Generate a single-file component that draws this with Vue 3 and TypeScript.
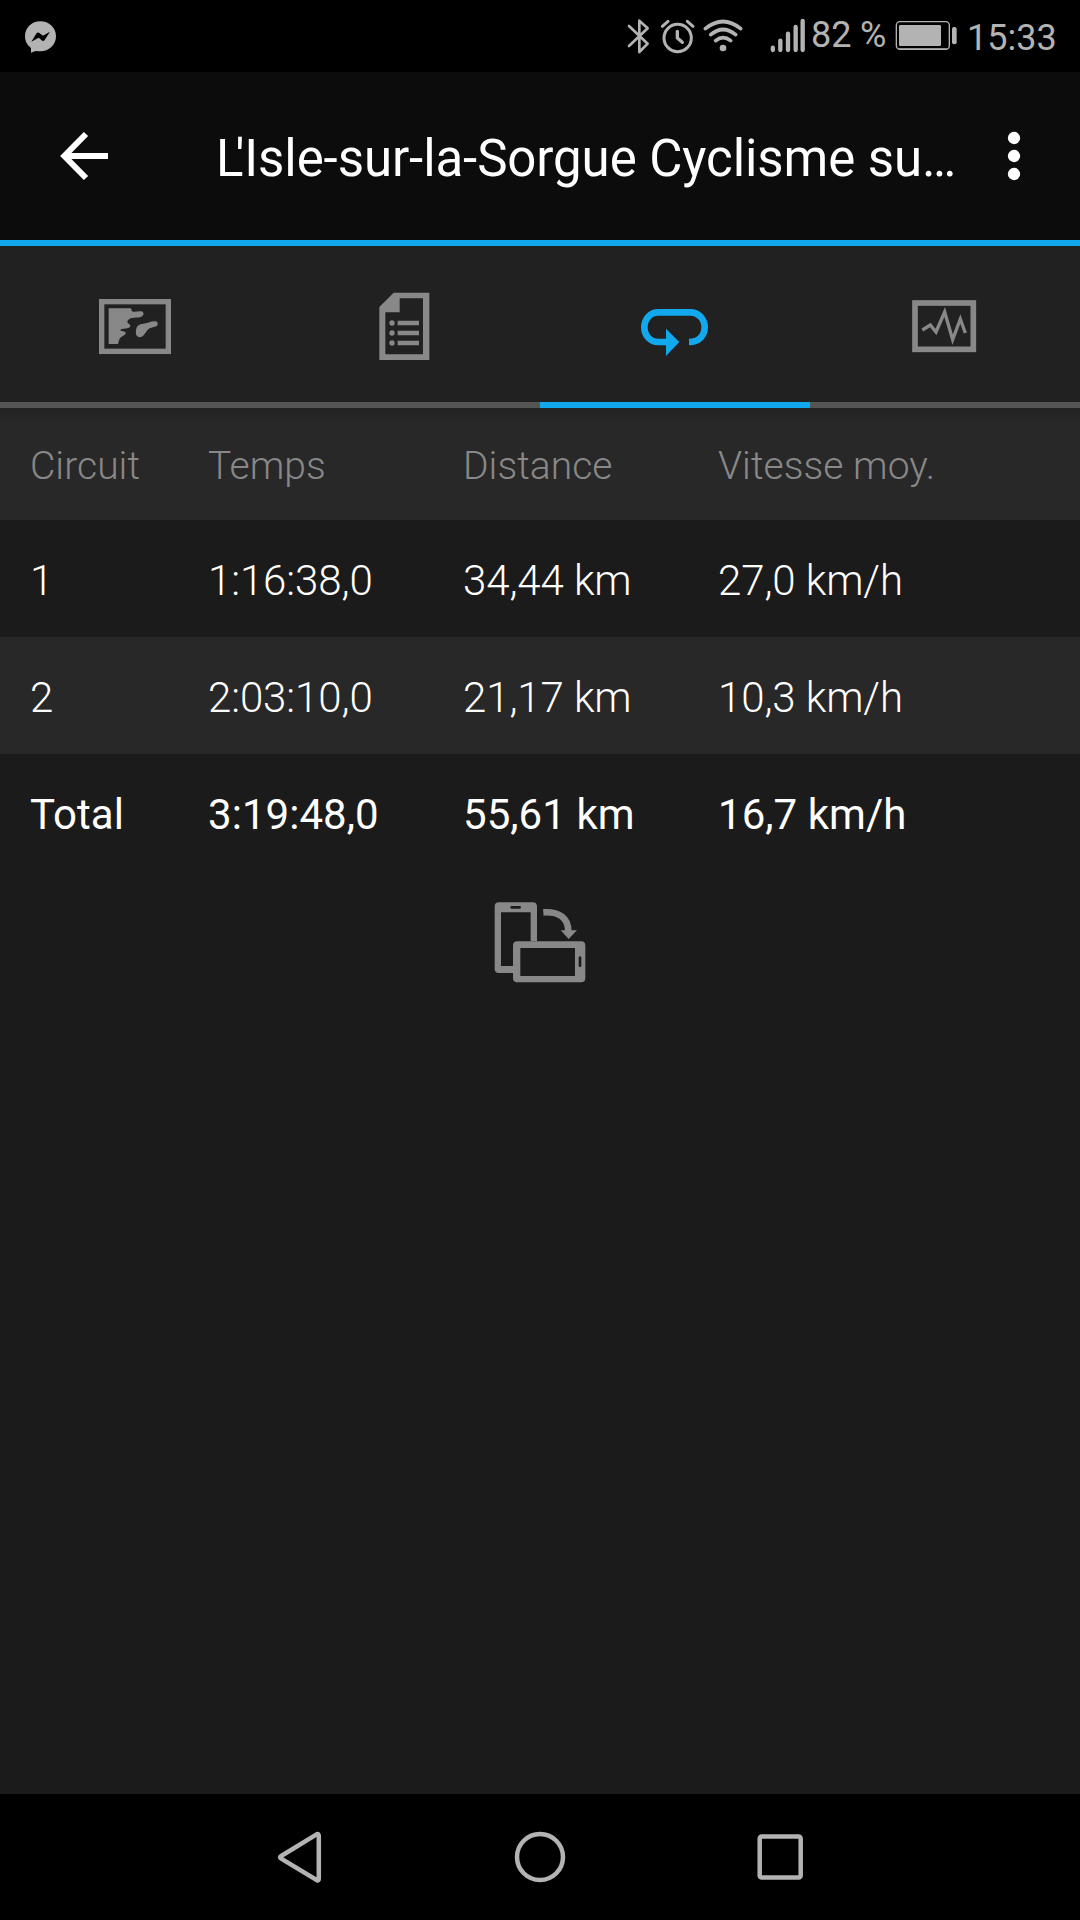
<script setup lang="ts">
interface Lap {
  lap: string
  time: string
  distance: string
  speed: string
  kind: string
}

const columns = ['Circuit', 'Temps', 'Distance', 'Vitesse moy.']
const laps: Lap[] = [
  { lap: '1', time: '1:16:38,0', distance: '34,44 km', speed: '27,0 km/h', kind: 'odd' },
  { lap: '2', time: '2:03:10,0', distance: '21,17 km', speed: '10,3 km/h', kind: 'even' },
  { lap: 'Total', time: '3:19:48,0', distance: '55,61 km', speed: '16,7 km/h', kind: 'total' },
]
</script>

<template>
  <div class="screen">
    <header class="status">
      <svg class="messenger" width="36" height="36" viewBox="66 54 108 108">
        <path fill="#b3b3b3" d="M121 64c26 0 47 19 47 45s-21 45-47 45c-6 0-10-1-14-1l-14 5v-14c-11-8-18-20-18-35 0-26 20-45 46-45z" />
        <path fill="#000" d="M94 125l16-26q3-3 7-1l12 9 21-12-16 25q-3 4-7 2l-11-9z" />
      </svg>
      <span class="spacer"></span>
      <svg width="150" height="72" viewBox="75 0 450 216" fill="none" stroke="#b3b3b3">
        <path stroke-width="8" stroke-linejoin="round" stroke-linecap="round" d="M87 78l56 53-25 25V62l25 23-56 53" />
        <circle cx="233" cy="114" r="41" stroke-width="9" />
        <path stroke-width="10" stroke-linecap="round" stroke-linejoin="round" d="M232 94v20l15 13" />
        <path stroke-width="9" stroke-linecap="round" d="M187 79l17-15M262 64l17 15" />
        <path stroke-width="11" stroke-linecap="round" d="M316 86q53-43 106 0M332 104q37-31 75 0M347 122q22-18 45 0" />
        <circle cx="369" cy="144" r="10" fill="#b3b3b3" stroke="none" />
      </svg>
      <svg class="signal" width="38" height="72" viewBox="507 0 114 216" stroke="#b3b3b3" stroke-width="13" stroke-linecap="round">
        <path d="M518.500 143v7M541 122v28M564 101v49M587 81v69M608 63v87" />
      </svg>
      <span class="percent">82 %</span>
      <svg class="battery" width="64" height="72" viewBox="885 0 192 216">
        <rect x="889" y="65" width="159" height="83" rx="11" fill="none" stroke="#b3b3b3" stroke-width="4" />
        <path d="M896 147h144" stroke="#b3b3b3" stroke-width="5" />
        <rect x="897" y="75" width="126" height="63" rx="4" fill="#b3b3b3" />
        <rect x="1056" y="81" width="14" height="52" rx="6" fill="#b3b3b3" />
      </svg>
      <span class="clock">15:33</span>
    </header>

    <div class="appbar">
      <svg class="back" width="52" height="52" viewBox="177 390 156 156" fill="none" stroke="#fff" stroke-width="18">
        <path d="M258 402l-65 66 65 66M191 468h133" />
      </svg>
      <h1><span class="initial">L</span>'Isle-sur-la-Sorgue Cyclisme su…</h1>
      <svg class="more" width="20" height="52" viewBox="612 90 60 156" fill="#fff">
        <circle cx="642" cy="114" r="18.500" /><circle cx="642" cy="168" r="18.500" /><circle cx="642" cy="222" r="18.500" />
      </svg>
    </div>

    <nav class="tabs">
      <div class="tab">
        <svg viewBox="30 -3 270 270" fill="#888">
          <rect x="65" y="65" width="200" height="149" fill="none" stroke="#888" stroke-width="16" />
          <path d="M86 85h66c5 4-1 9 8 10 8 1 17-3 25-1 8 3 7 13-1 16-9 4-19 1-29 4-8 3-14 7-13 13 2 5 10 5 9 12-2 8-18 6-28 9-4 3-1 6 7 6 6 1 9 5 6 9-5 5-13 7-17 13-3 6-3 10-5 16H86z" />
          <path d="M172 139c7-8 19-7 29-10 9-3 18-7 26-5 8 3 8 11 2 15-6 3-14 3-20 6-9 5-13 17-20 23-7 6-19 4-21-5-1-9 0-18 4-24z" />
        </svg>
      </div>
      <div class="tab">
        <svg viewBox="0 -3 270 270" fill="#888">
          <path fill-rule="evenodd" d="M101 38h107v202H58V81zM119 55v42H76v126h113V55z" />
          <circle cx="96" cy="129" r="8" /><circle cx="96" cy="159" r="8" /><circle cx="96" cy="189" r="8" />
          <path d="M113 122h64v14h-64zM113 152h64v14h-64zM113 182h64v14h-64z" />
        </svg>
      </div>
      <div class="tab active">
        <svg viewBox="330 -3 270 270">
          <path fill="none" stroke="#12a8ee" stroke-width="20" d="M442 186h-27c-24 0-42-19-42-44s18-45 42-45h95c26 0 44 20 44 45s-18 44-47 44" />
          <path fill="#12a8ee" d="M438 146l40 40-40 42z" />
        </svg>
      </div>
      <div class="tab">
        <svg viewBox="30 -3 270 270" fill="none" stroke="#888">
          <rect x="75" y="69" width="175" height="139" stroke-width="17" />
          <path stroke-width="10" stroke-miterlimit="8" d="M97 150l24-15 17 21 26-60 24 83 23-62 15 42" />
        </svg>
      </div>
    </nav>

    <main>
      <div class="row head">
        <span v-for="c in columns" :key="c">{{ c }}</span>
      </div>
      <div v-for="l in laps" :key="l.lap" class="row" :class="l.kind">
        <span>{{ l.lap }}</span>
        <span>{{ l.time }}</span>
        <span>{{ l.distance }}</span>
        <span>{{ l.speed }}</span>
      </div>
      <svg class="rotate" width="120" height="110" viewBox="0 0 360 330">
        <path fill="#888" fill-rule="evenodd" d="M57 37h101q13 0 13 13v104h-19V67H63v161h37v21H57q-13 0-13-13V50q0-13 13-13zM95 48q-4 0-4 4t4 4h24q4 0 4-4t-4-4z" />
        <path fill="#888" fill-rule="evenodd" d="M112 154h191q13 0 13 13v97q0 13-13 13H112q-13 0-13-13v-97q0-13 13-13zM121 174v84h164v-84zM300 199q-4 0-4 4v24q0 4 4 4t4-4v-24q0-4-4-4z" />
        <path fill="none" stroke="#888" stroke-width="20" d="M190 67c47-3 75 16 75 57" />
        <path fill="#888" d="M242 121h49l-25 26z" />
      </svg>
    </main>

    <footer class="navbar">
      <svg width="56" height="60" viewBox="0 0 56 60"><path d="M45 8.200L9.200 30Q7 31.300 9.200 32.700L45 54.300Q46.800 55 46.800 52.500V10Q46.800 7.500 45 8.200z" /></svg>
      <svg width="56" height="60" viewBox="0 0 56 60"><circle cx="28" cy="31" r="23" /></svg>
      <svg width="56" height="60" viewBox="0 0 56 60"><rect x="7.700" y="10.500" width="41" height="41" rx="2" /></svg>
    </footer>
  </div>
</template>

<style>
body {
  margin: 0;
  background: #1b1b1b;
}
</style>

<style scoped>
.screen {
  width: 1080px;
  height: 1920px;
  display: flex;
  flex-direction: column;
  overflow: hidden;
  background: #1b1b1b;
  color: #fff;
  font-family: Roboto, "Noto Sans", sans-serif;
}
svg {
  display: block;
  flex: none;
}
.status {
  height: 72px;
  flex: none;
  display: flex;
  align-items: center;
  background: #000;
  color: #b3b3b3;
  font-size: 36px;
  white-space: nowrap;
}
.messenger {
  margin-left: 22px;
}
.spacer {
  flex: 1;
}
.signal {
  margin-left: -6px;
}
.percent {
  width: 84px;
  margin-left: 4px;
  line-height: 70px;
  height: 72px;
  letter-spacing: -0.1px;
}
.battery {
  margin-right: 8px;
}
.clock {
  width: 113px;
  line-height: 76px;
  height: 72px;
}
.appbar {
  height: 168px;
  flex: none;
  display: flex;
  align-items: center;
  background: #0c0c0c;
  border-bottom: 6px solid #12a8ee;
}
.back {
  margin-left: 59px;
}
h1 {
  width: 760px;
  margin: 5px 0 0 105px;
  font-size: 51px;
  font-weight: 400;
  letter-spacing: -0.08px;
  white-space: nowrap;
}
.initial {
  letter-spacing: -8px;
}
.more {
  margin-left: 28px;
}
.tabs {
  height: 162px;
  flex: none;
  display: flex;
  background: #212121;
}
.tab {
  flex: 1;
  display: flex;
  align-items: center;
  justify-content: center;
  border-bottom: 6px solid #555;
}
.tab.active {
  border-color: #12a8ee;
}
.tab svg {
  width: 90px;
  height: 90px;
}
main {
  flex: 1;
}
.row {
  display: grid;
  grid-template-columns: 178px 255px 255px 1fr;
  align-items: center;
  box-sizing: border-box;
  height: 117px;
  padding: 3px 0 0 30px;
  font-size: 42px;
  font-weight: 300;
  letter-spacing: -0.1px;
  white-space: nowrap;
}
.head {
  height: 112px;
  padding-top: 4px;
  font-size: 39px;
  letter-spacing: 0.04px;
  color: #888;
  background: linear-gradient(#222, #282828 14px);
}
.even {
  background: #282828;
}
.total {
  font-weight: 400;
  letter-spacing: 0.05px;
}
.rotate {
  margin: 19px auto 0;
}
.navbar {
  height: 126px;
  flex: none;
  display: flex;
  justify-content: center;
  align-items: center;
  gap: 184px;
  padding-bottom: 2px;
  box-sizing: border-box;
  background: #000;
}
.navbar svg {
  fill: none;
  stroke: #b3b3b3;
  stroke-width: 4.500;
}
</style>
